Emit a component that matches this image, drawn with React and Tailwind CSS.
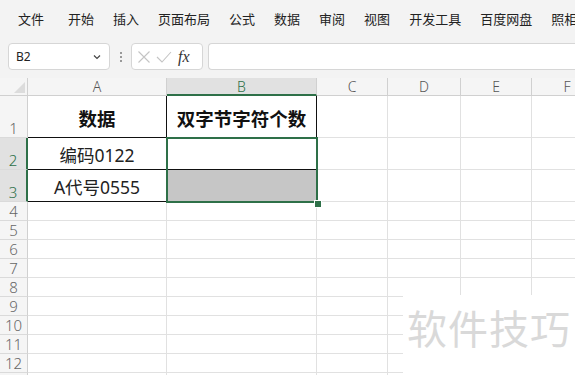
import React from "react";

const FONT = { fontFamily: '"Noto Sans", "Noto Sans CJK SC", sans-serif' };
const menus = ["文件", "开始", "插入", "页面布局", "公式", "数据", "审阅", "视图", "开发工具", "百度网盘", "照相"];
const cols = [
  { k: "A", w: "w-[139px]" },
  { k: "B", w: "w-[150px]" },
  { k: "C", w: "w-[71px]" },
  { k: "D", w: "w-[73px]" },
  { k: "E", w: "w-[71px]" },
  { k: "F", w: "w-[71px]" },
];

function RowHead({ n, h, sel }) {
  return (
    <div
      className={`w-[28px] shrink-0 ${h} flex items-end justify-center border-b border-r ${
        sel ? "bg-[#e1e1e1] text-[#2e7048] border-r-[#2e7048] border-r-2" : "bg-[#f5f5f5] text-[#666] border-r-[#d0d0d0]"
      } border-b-[#dadada] text-[15px] leading-[18px] font-light`}
    >
      {n}
    </div>
  );
}

export default function App() {
  const smallRows = [4, 5, 6, 7, 8, 9, 10, 11, 12, 13];
  return (
    <div className="w-[575px] h-[375px] overflow-hidden bg-white relative" style={FONT}>
      {/* Top menu */}
      <div className="bg-[#f3f3f3] h-[78px] flex flex-col">
        <div className="h-[40px] flex items-center pl-[18px] gap-[19px] text-[13px] text-[#222] whitespace-nowrap">
          {menus.map((m, i) => (
            <span key={m} className={i === 0 ? "mr-[5px]" : ""}>
              {m}
            </span>
          ))}
        </div>
        <div className="flex items-start mt-[3px] h-[27px]">
          <div className="ml-[8px] w-[102px] h-[27px] bg-white border border-[#d6d6d6] rounded-[4px] flex items-center justify-between px-[7px] text-[12px] text-[#222]">
            <span>B2</span>
            <svg width="10" height="10" viewBox="0 0 10 10" fill="none" stroke="#444" strokeWidth="1.2">
              <path d="M2 3.5 L5 6.5 L8 3.5" />
            </svg>
          </div>
          <div className="w-[21px] h-[27px] flex flex-col items-center justify-center gap-[2px]">
            <span className="w-[2px] h-[2px] bg-[#999]"></span>
            <span className="w-[2px] h-[2px] bg-[#999]"></span>
            <span className="w-[2px] h-[2px] bg-[#999]"></span>
          </div>
          <div className="w-[72px] h-[27px] bg-white border border-[#d6d6d6] rounded-[4px] flex items-center px-[5px] gap-[5px]">
            <svg width="14" height="14" viewBox="0 0 14 14" fill="none" stroke="#c4c4c4" strokeWidth="1.1">
              <path d="M1.5 1.5 L12.5 12.5 M12.5 1.5 L1.5 12.5" />
            </svg>
            <svg width="16" height="14" viewBox="0 0 16 14" fill="none" stroke="#c4c4c4" strokeWidth="1.1">
              <path d="M1 7 L6 12 L15 2" />
            </svg>
            <span className="text-[16px] italic text-[#333] leading-none ml-[1px]" style={{ fontFamily: '"Liberation Serif", serif' }}>
              fx
            </span>
          </div>
          <div className="ml-[5px] flex-1 h-[27px] bg-white border border-[#d6d6d6] border-r-0 rounded-l-[4px]"></div>
        </div>
      </div>

      {/* Column header */}
      <div className="flex h-[18px]">
        <div className="w-[28px] shrink-0 bg-[#f5f5f5] border-r border-b border-[#d0d0d0] relative overflow-hidden">
          <div className="absolute right-[2px] bottom-[2px] w-0 h-0 border-l-[11px] border-l-transparent border-b-[11px] border-b-[#dcdcdc]"></div>
        </div>
        {cols.map((c) => (
          <div
            key={c.k}
            className={`${c.w} shrink-0 flex items-center justify-center text-[14px] font-light border-r ${
              c.k === "B"
                ? "bg-[#e1e1e1] text-[#2e7048] border-b-2 border-b-[#2e7048] border-r-[#d0d0d0]"
                : "bg-[#f5f5f5] text-[#555] border-b border-[#d0d0d0]"
            }`}
          >
            {c.k}
          </div>
        ))}
      </div>

      {/* Row 1 */}
      <div className="flex h-[42px]">
        <RowHead n="1" h="h-[42px]" />
        <div className="w-[139px] shrink-0 border-r border-b border-[#111] flex items-center justify-center pt-[5px] text-[18.5px] font-bold text-[#111]">
          数据
        </div>
        <div className="w-[150px] shrink-0 border-r border-b border-[#111] flex items-center justify-center pt-[5px] text-[18.5px] font-bold text-[#111] whitespace-nowrap">
          双字节字符个数
        </div>
        {cols.slice(2).map((c) => (
          <div key={c.k} className={`${c.w} shrink-0 border-r border-b border-[#e1e1e1]`}></div>
        ))}
      </div>

      {/* Row 2 */}
      <div className="flex h-[32px]">
        <RowHead n="2" h="h-[32px]" sel />
        <div className="w-[139px] shrink-0 border-r border-b border-[#111] flex items-center justify-center pt-[4px] text-[17.5px] text-[#222]">
          编码0122
        </div>
        <div className="w-[150px] shrink-0 border-r border-b border-[#111]"></div>
        {cols.slice(2).map((c) => (
          <div key={c.k} className={`${c.w} shrink-0 border-r border-b border-[#e1e1e1]`}></div>
        ))}
      </div>

      {/* Row 3 */}
      <div className="flex h-[32px]">
        <RowHead n="3" h="h-[32px]" sel />
        <div className="w-[139px] shrink-0 border-r border-b border-[#111] flex items-center justify-center pt-[4px] text-[17.5px] text-[#222]">
          A代号0555
        </div>
        <div className="w-[150px] shrink-0 border-r border-b border-[#111] bg-[#c6c6c6]"></div>
        {cols.slice(2).map((c) => (
          <div key={c.k} className={`${c.w} shrink-0 border-r border-b border-[#e1e1e1]`}></div>
        ))}
      </div>

      {smallRows.map((n) => (
        <div key={n} className="flex h-[19px]">
          <RowHead n={String(n)} h="h-[19px]" />
          {cols.map((c) => (
            <div key={c.k} className={`${c.w} shrink-0 border-r border-b border-[#e1e1e1]`}></div>
          ))}
        </div>
      ))}

      {/* Selection overlay B2:B3 */}
      <div className="absolute left-[166px] top-[137px] w-[152px] h-[66px] border-2 border-[#2e7048] pointer-events-none"></div>
      <div className="absolute left-[314px] top-[200px] w-[6px] h-[6px] bg-[#2e7048] border border-white box-content"></div>

      {/* Watermark */}
      <div className="absolute left-[403px] top-[295px] w-[172px] h-[80px] bg-white flex items-start pl-[4px] pt-[8px]">
        <span className="text-[40px] leading-[48px] text-[#d9d9d9] tracking-[1px]" style={{ fontFamily: '"Noto Sans CJK SC", sans-serif' }}>
          软件技巧
        </span>
      </div>
    </div>
  );
}
